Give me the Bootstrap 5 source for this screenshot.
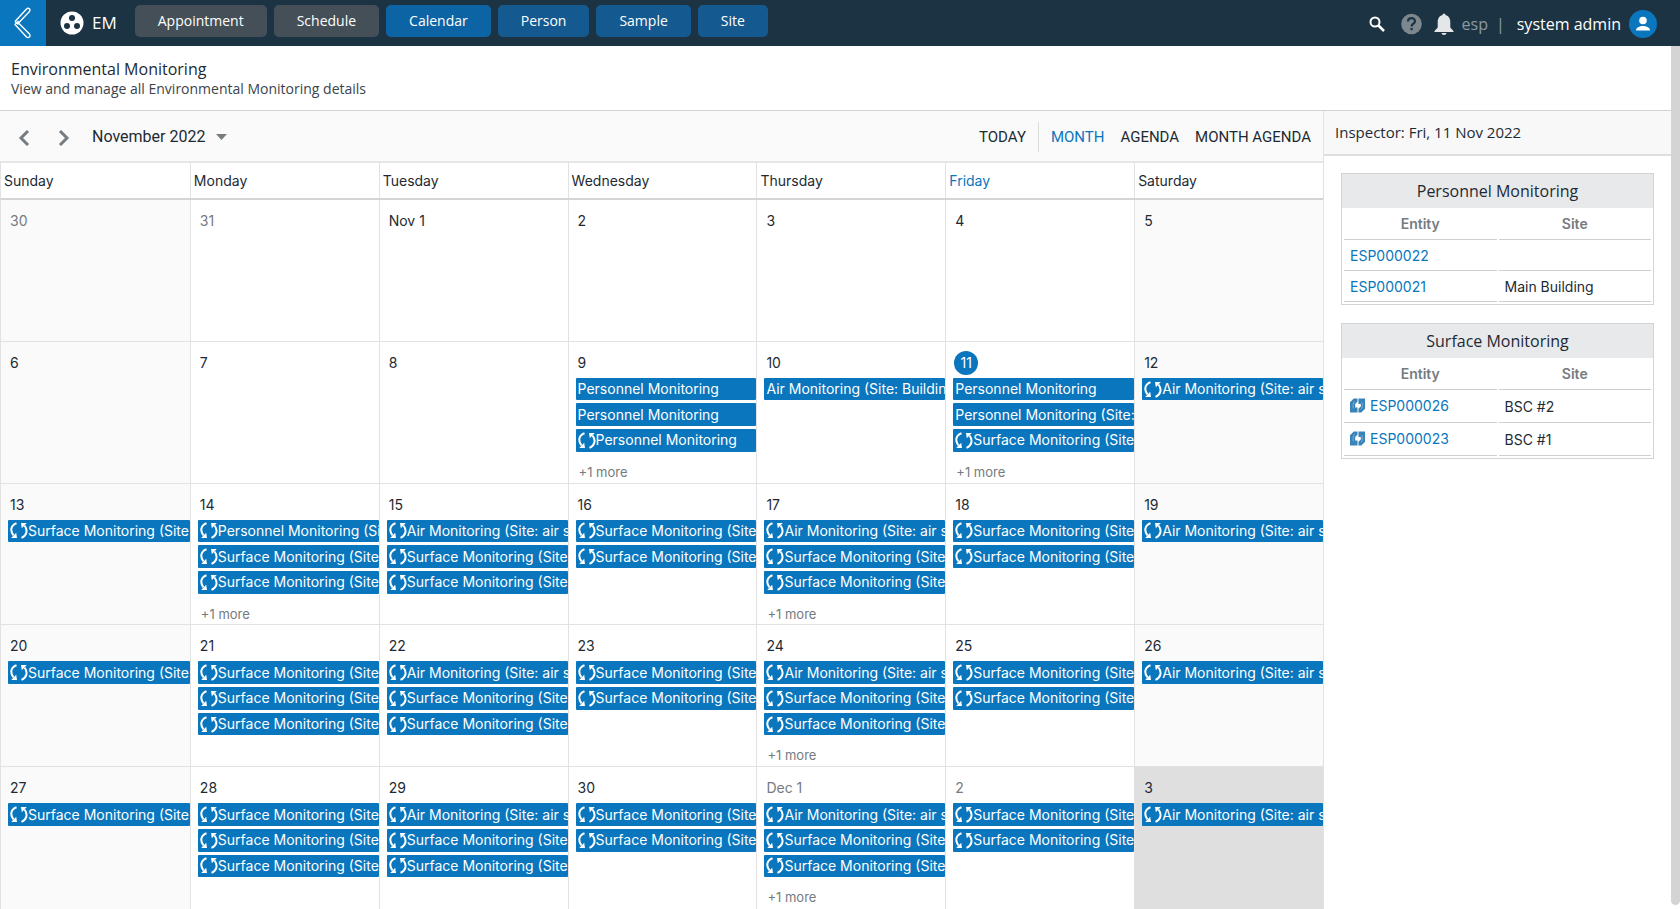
<!DOCTYPE html>
<html lang="en">
<head>
<meta charset="utf-8">
<meta name="viewport" content="width=device-width, initial-scale=1">
<title>Environmental Monitoring</title>
<link href="https://cdn.jsdelivr.net/npm/bootstrap@5.3.0/dist/css/bootstrap.min.css" rel="stylesheet">
<style>
  :root { --brand: #0a76bd; --ink: #1d2a33; --line: #e2e2e2; --muted: #757b80; }
  body { font-family: "Open Sans", sans-serif; font-size: 14px; color: var(--ink); line-height: 20px; background: #fff; }
  a { color: var(--brand); }
  .ui-inter { font-family: Inter, sans-serif; }
  .ui-roboto { font-family: Roboto, sans-serif; font-size: 16px; }

  .topbar { height: 46px; background: #1b3342; color: #fff; }
  .back-link { width: 46px; background: var(--brand); }
  .product { padding-left: 14px; }
  .sections { gap: 7px; margin: 5px 0 0 18px; }
  .topbar .btn { height: 32px; padding: 0 22px; border: 1px solid transparent; border-radius: 5px; font-size: 14px; line-height: 20px; font-weight: 500; color: #fff; }
  .btn-slate { background: #444f57; }
  .btn-deep { background: #14598f; }
  .topbar .btn-current { background: #0c64a5; }
  .tool-icon { padding: 0; border: 0; background: none; line-height: 0; }
  .tools { padding: 2px 23px 0 0; }
  .brand-name { font-size: 17px; }
  .user-text { font-size: 16px; }

  .page-head { height: 65px; padding: 13px 11px 0; border-bottom: 1px solid #d2d2d2; }
  .page-head h1 { font-size: 16px; line-height: 20px; margin: 0; font-weight: 400; }
  .page-head p { margin: 0; color: #3a444b; }

  .cal-bar { height: 52px; background: #fafafa; border-bottom: 2px solid #e6e6e6; padding: 2px 12px 0 16px; }
  .cal-bar button { border: 0; background: none; padding: 0; color: var(--ink); line-height: 24px; }
  .views { font-size: 15px; }
  .cal-bar button.current { color: var(--brand); }
  .bar-split { width: 1px; height: 30px; background: #dcdcdc; margin: 0 12px; }
  .week-head, .month-grid { display: grid; grid-template-columns: repeat(7, minmax(0, 1fr)); border-left: 1px solid var(--line); }
  .week-head { height: 37px; border-bottom: 2px solid #d4d4d4; }
  .week-head div { padding: 8px 3px 0; }
  .week-head div + div { border-left: 1px solid var(--line); }
  .month-grid { grid-template-rows: repeat(5, minmax(141px, 1fr)); }
  .day { border-left: 1px solid var(--line); border-bottom: 1px solid var(--line); padding: 11px 0 0 7px; }
  .day:nth-child(7n + 1) { border-left: 0; }
  .day:nth-last-child(-n + 7) { border-bottom: 0; }
  .day.off { background: #fafafa; }
  .day.marked { background: #dfdfdf; }
  .day-num { height: 20px; margin: 0 0 5px 2px; }
  .day.outside .day-num { color: var(--muted); }
  .day.today .day-num { width: 24px; height: 24px; margin: -2px 0 3px 1px; line-height: 24px; text-align: center; color: #fff; background: var(--brand); border-radius: 50%; }
  .events { display: grid; grid-template-rows: repeat(3, 1fr); gap: 3px; height: 74px; }
  .event { display: flex; align-items: center; overflow: hidden; white-space: nowrap; padding-left: 2px; background: var(--brand); color: #fff; text-decoration: none; border-radius: 1px; }
  .event svg { flex: none; }
  .more-link { display: block; margin: 11px 0 0 3px; font-size: 13px; line-height: 19px; color: var(--muted); text-decoration: none; }

  .inspector { width: 348px; border-left: 1px solid var(--line); }
  .inspector-head { height: 45px; padding: 11px; background: #f8f8f8; border-bottom: 2px solid #dedede; font-size: 15px; }
  .panels { padding: 17px; gap: 18px; }
  .panel { border: 1px solid #d2d4d6; }
  .panel h2 { margin: 0; padding: 7px 0; background: #e8e9eb; font-size: 16px; line-height: 20px; font-weight: 400; text-align: center; }
  .panel table { width: 100%; border-collapse: separate; border-spacing: 2px 0; table-layout: fixed; margin-bottom: 2px; }
  .panel th { height: 32px; padding-top: 2px; text-align: center; font-weight: 600; color: var(--muted); border-bottom: 1px solid #cfcfcf; }
  .panel td { height: 31px; padding: 2px 6px 0; border-bottom: 1px solid #cfcfcf; }
  .panel .tall td { height: 33px; }
  .panel td a { text-decoration: none; }
  .scroll-rail { width: 9px; background: #d4d4d4; border-radius: 0 0 5px 5px; margin-bottom: 4px; }
</style>
</head>
<body class="d-flex flex-column min-vh-100">

<svg width="0" height="0" class="position-absolute" aria-hidden="true">
  <symbol id="cycle" viewBox="0 0 18 17">
    <path d="M6.500 1.200C.5 3.400 0 9 3.500 13.500M11.500 15.800C17 13.500 18 8 14.500 3.500" fill="none" stroke="currentColor" stroke-width="2"/>
    <path d="M1.200 16H7L6.200 10.800zM11 1H16.800L11.800 6.200z" fill="currentColor"/>
  </symbol>
  <symbol id="cycle-box" viewBox="0 0 17 16">
    <path d="M4 0h4v3.500L5.500 6v3.500H8V15H0V4zM9 0h7v11l-4 4H9v-4l2.500-2.500V6H9z" fill="#3a83b8"/>
    <path d="M5 3C3 5 3 8 3.500 10.500M12 11.500c1.500-2.500 1.500-5.500.5-7.500" stroke="#7fb0d4" fill="none"/>
  </symbol>
</svg>

<header class="topbar d-flex align-items-stretch">
  <a class="back-link d-flex align-items-center justify-content-center" href="#" aria-label="Back">
    <svg width="18" height="32" viewBox="0 0 18 32" fill="none" stroke="#fff" stroke-width="1.400" stroke-linejoin="round"><path d="M13 1.500Q15 .5 16 2.500 16 4 15 5L4.500 16 15.500 27Q16.500 29 15.500 30 14 31 12.500 30L1 17.500 4.500 14M1 14.500 13 1.500M1 14.500 4.500 17.500"/></svg>
  </a>
  <div class="product d-flex align-items-center">
    <svg width="24" height="24" viewBox="0 0 24 24"><circle cx="12" cy="12" r="11.500" fill="#fff"/><g fill="#1b3342"><circle cx="12" cy="7" r="3"/><circle cx="7" cy="15" r="3"/><circle cx="17" cy="15" r="3"/></g></svg>
    <span class="brand-name ms-2">EM</span>
  </div>
  <nav class="sections d-flex align-items-start" aria-label="Sections">
    <button type="button" class="btn btn-slate">Appointment</button>
    <button type="button" class="btn btn-slate">Schedule</button>
    <button type="button" class="btn btn-current">Calendar</button>
    <button type="button" class="btn btn-deep">Person</button>
    <button type="button" class="btn btn-deep">Sample</button>
    <button type="button" class="btn btn-deep">Site</button>
  </nav>
  <div class="tools d-flex align-items-center ms-auto">
    <button type="button" class="tool-icon me-3" aria-label="Search"><svg width="16" height="16" viewBox="0 0 16 16" fill="none" stroke="#fff" stroke-width="2"><circle cx="6" cy="6" r="4.500"/><path d="m9.500 9.500 5.500 5.500" stroke-width="2.500"/></svg></button>
    <button type="button" class="tool-icon me-2" aria-label="Help"><svg width="21" height="22" viewBox="0 0 21 22"><circle cx="10.500" cy="11" r="10.300" fill="#7d878e"/><path d="M7 8.500C7 4 14 4 14 8.200c0 2.500-3.400 2.600-3.400 5.300M10.600 15v2.200" fill="none" stroke="#1b3342" stroke-width="2.200"/></svg></button>
    <button type="button" class="tool-icon ms-1 me-2" aria-label="Notifications"><svg width="20" height="22" viewBox="0 0 20 22" fill="#e4e6e8"><path d="M8.500 2a1.500 1.500 0 0 1 3 0c3.500 1 4.800 3.800 4.800 7v5.500L19.500 18v1H.5v-1l3.200-3.500V9c0-3.200 1.300-6 4.800-7zM7.500 20h5a2.500 2 0 0 1-5 0z"/></svg></button>
    <span class="user-text text-white-50">esp</span>
    <span class="user-text text-white-50 ms-1 ps-1">|</span>
    <span class="user-text ms-2 ps-1">system admin</span>
    <a href="#" class="ms-2 lh-1" aria-label="Account"><svg width="28" height="28" viewBox="0 0 28 28"><circle cx="14" cy="14" r="14" fill="#0a76bd"/><circle cx="14" cy="10.500" r="3.800" fill="#fff"/><path d="M7 20.500c0-6 14-6 14 0z" fill="#fff"/></svg></a>
  </div>
</header>

<div class="d-flex flex-grow-1">
  <div class="d-flex flex-column flex-grow-1">
    <div class="page-head">
      <h1>Environmental Monitoring</h1>
      <p>View and manage all Environmental Monitoring details</p>
    </div>
    <div class="d-flex flex-grow-1">
      <main class="d-flex flex-column flex-grow-1">
        <div class="cal-bar ui-roboto d-flex align-items-center">
          <button type="button" aria-label="Previous month"><svg width="16" height="16" viewBox="0 0 16 16" fill="none" stroke="#757d83" stroke-width="3"><path d="M12 1 5 8l7 7"/></svg></button>
          <button type="button" class="ms-4" aria-label="Next month"><svg width="16" height="16" viewBox="0 0 16 16" fill="none" stroke="#757d83" stroke-width="3"><path d="m4 1 7 7-7 7"/></svg></button>
          <button type="button" class="d-flex align-items-center ms-3 ps-1">November 2022<svg class="ms-2" width="16" height="6" viewBox="0 0 16 6"><path d="M3 0h11L8.500 6z" fill="#757d83"/></svg></button>
          <div class="views d-flex align-items-center ms-auto">
            <button type="button">TODAY</button>
            <span class="bar-split"></span>
            <div class="d-flex gap-3">
              <button type="button" class="current">MONTH</button>
              <button type="button">AGENDA</button>
              <button type="button">MONTH AGENDA</button>
            </div>
          </div>
        </div>
        <div class="week-head ui-inter">
          <div>Sunday</div><div>Monday</div><div>Tuesday</div><div>Wednesday</div><div>Thursday</div><div style="color:var(--brand)">Friday</div><div>Saturday</div>
        </div>
        <div class="month-grid ui-inter flex-grow-1" id="month"></div>
      </main>
      <aside class="inspector flex-shrink-0">
        <div class="inspector-head">Inspector: Fri, 11 Nov 2022</div>
        <div class="panels d-flex flex-column">
          <section class="panel">
            <h2>Personnel Monitoring</h2>
            <table class="ui-inter">
              <thead><tr><th scope="col">Entity</th><th scope="col">Site</th></tr></thead>
              <tbody>
                <tr><td><a href="#">ESP000022</a></td><td></td></tr>
                <tr><td><a href="#">ESP000021</a></td><td>Main Building</td></tr>
              </tbody>
            </table>
          </section>
          <section class="panel">
            <h2>Surface Monitoring</h2>
            <table class="ui-inter">
              <thead><tr><th scope="col">Entity</th><th scope="col">Site</th></tr></thead>
              <tbody class="tall">
                <tr><td><svg class="me-1 mb-1" width="16" height="16"><use href="#cycle-box"/></svg><a href="#">ESP000026</a></td><td>BSC #2</td></tr>
                <tr><td><svg class="me-1 mb-1" width="16" height="16"><use href="#cycle-box"/></svg><a href="#">ESP000023</a></td><td>BSC #1</td></tr>
              </tbody>
            </table>
          </section>
        </div>
      </aside>
    </div>
  </div>
  <div class="scroll-rail flex-shrink-0"></div>
</div>

<script>
  // Event labels by key; a capital key means the event recurs.
  const labels = {
    p: 'Personnel Monitoring', q: 'Personnel Monitoring (Site:', r: 'Personnel Monitoring (Si',
    s: 'Surface Monitoring (Site', a: 'Air Monitoring (Site: air s', b: 'Air Monitoring (Site: Buildin'
  };
  // [day label, event keys, hidden event count]
  const days = [
    ['30'], ['31'], ['Nov 1'], ['2'], ['3'], ['4'], ['5'],
    ['6'], ['7'], ['8'], ['9', 'ppP', 1], ['10', 'b'], ['11', 'pqS', 1], ['12', 'A'],
    ['13', 'S'], ['14', 'RSS', 1], ['15', 'ASS'], ['16', 'SS'], ['17', 'ASS', 1], ['18', 'SS'], ['19', 'A'],
    ['20', 'S'], ['21', 'SSS'], ['22', 'ASS'], ['23', 'SS'], ['24', 'ASS', 1], ['25', 'SS'], ['26', 'A'],
    ['27', 'S'], ['28', 'SSS'], ['29', 'ASS'], ['30', 'SS'], ['Dec 1', 'ASS', 1], ['2', 'SS'], ['3', 'A']
  ];
  document.getElementById('month').innerHTML = days.map(([label, keys = '', more], i) => {
    const cls = ['day'];
    if (i % 7 === 0 || i % 7 === 6) cls.push('off');
    if (i < 2 || i === 32 || i === 33) cls.push('outside');
    if (i === 12) cls.push('today');
    if (i === 34) cls.push('marked');
    const events = [...keys].map(k => {
      const icon = k < 'a' ? '<svg width="18" height="17"><use href="#cycle"/></svg>' : '';
      return `<a class="event" href="#">${icon}${labels[k.toLowerCase()]}</a>`;
    }).join('');
    return `<div class="${cls.join(' ')}"><div class="day-num">${label}</div><div class="events">${events}</div>` +
      (more ? `<a class="more-link" href="#">+${more} more</a>` : '') + '</div>';
  }).join('');
</script>
<script src="https://cdn.jsdelivr.net/npm/bootstrap@5.3.0/dist/js/bootstrap.bundle.min.js"></script>
</body>
</html>
